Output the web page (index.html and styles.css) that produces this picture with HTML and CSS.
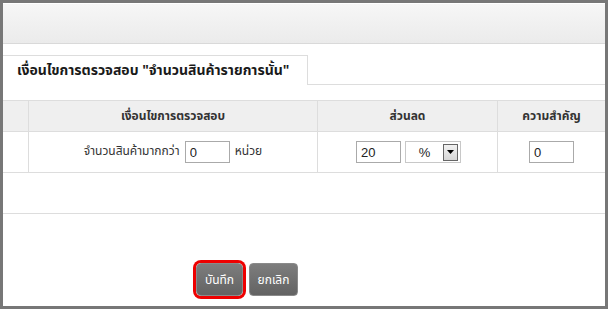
FILE: index.html
```html
<!DOCTYPE html>
<html lang="th">
<head>
  <meta charset="UTF-8">
  <title>เงื่อนไขการตรวจสอบ</title>
  <link rel="stylesheet" href="styles.css">
</head>
<body>

  <div class="dialog">
    <!-- แถบหัวของหน้าต่าง -->
    <div class="dialog-head"></div>

    <div class="tabs">
      <div class="tab">เงื่อนไขการตรวจสอบ "จำนวนสินค้ารายการนั้น"</div>
      <div class="tab-rest"></div>
    </div>

    <table class="grid">
      <tr>
        <th class="col-idx"></th>
        <th class="col-cond">เงื่อนไขการตรวจสอบ</th>
        <th class="col-disc">ส่วนลด</th>
        <th class="col-prio">ความสำคัญ</th>
      </tr>
      <tr>
        <td class="col-idx"></td>
        <td class="col-cond">
          จำนวนสินค้ามากกว่า <input class="num" type="text" value="0"> หน่วย
        </td>
        <td class="col-disc">
          <input class="num" type="text" value="20"><span class="select">
            <span class="select-val">%</span>
            <span class="select-btn">
              <svg width="7" height="4" viewBox="0 0 7 4"><path d="M0 0h7L3.5 4z" fill="#000"/></svg>
            </span>
          </span>
        </td>
        <td class="col-prio"><input class="num" type="text" value="0"></td>
      </tr>
    </table>

    <div class="spacer"></div>

    <div class="actions">
      <button class="btn btn-focus">บันทึก</button>
      <button class="btn">ยกเลิก</button>
    </div>
  </div>

</body>
</html>
```

FILE: styles.css
```css
html, body {
  margin: 0;
  padding: 0;
}
body {
  background: #777777;
  font-family: Tahoma, "Noto Sans Thai", "Loma", "Garuda", "DejaVu Sans", sans-serif;
  font-size: 12px;
  color: #333;
  padding: 3px 3px 3px 3px;
  width: 602px;
  height: 303px;
  overflow: hidden;
}
.dialog {
  background: white;
  height: 303px;
}
.dialog-head {
  height: 39px;
  border-top: 1px solid #ffffff;
  border-bottom: 1px solid #d9d9d9;
  background: linear-gradient(#f6f6f6, #ebebeb);
}
.tabs {
  display: flex;
  align-items: flex-end;
  height: 41px;
}
.tab {
  height: 30px;
  width: 305px;
  box-sizing: border-box;
  padding-left: 14px;
  border-top: 1px solid #dddddd;
  border-right: 1px solid #dddddd;
  font-size: 14px;
  font-weight: bold;
  color: #1a1a1a;
  line-height: 30px;
  white-space: nowrap;
}
.tab-rest {
  flex: 1;
  border-bottom: 1px solid #dddddd;
}
.grid {
  margin-top: 15px;
  width: 100%;
  border-collapse: collapse;
  border-top: 1px solid #dddddd;
  border-bottom: 1px solid #dddddd;
}
.grid th {
  background: #efefef;
  height: 30px;
  padding: 0;
  font-weight: bold;
  color: #333;
  border-bottom: 1px solid #dddddd;
}
.grid td {
  height: 40px;
  padding: 0;
  text-align: center;
}
.grid th + th,
.grid td + td {
  border-left: 1px solid #dddddd;
}
.col-idx { width: 25px; }
.col-cond { width: 288px; }
.col-disc { width: 179px; }
.num {
  width: 45px;
  height: 22px;
  box-sizing: border-box;
  border: 1px solid #aaaaaa;
  padding: 0 4px;
  font-family: "Liberation Sans", Arial, sans-serif;
  font-size: 13px;
  color: #222;
  vertical-align: middle;
  margin: 0 2px;
}
.select {
  display: inline-flex;
  align-items: center;
  width: 56px;
  height: 22px;
  box-sizing: border-box;
  border: 1px solid #c8c8c8;
  vertical-align: middle;
  margin-left: 2px;
}
.select-val {
  flex: 1;
  font-family: "Liberation Sans", Arial, sans-serif;
  font-size: 13px;
  color: #222;
  text-align: center;
}
.select-btn {
  width: 15px;
  height: 17px;
  margin-right: 2px;
  box-sizing: border-box;
  border: 1px solid #666;
  background: linear-gradient(#f2f2f2, #d6d6d6);
  display: flex;
  align-items: center;
  justify-content: center;
}
.spacer {
  height: 40px;
  border-bottom: 1px solid #dddddd;
}
.actions {
  display: flex;
  gap: 6px;
  padding-top: 49px;
  padding-left: 193px;
}
.btn {
  width: 49px;
  height: 33px;
  border: 1px solid #8a8a8a;
  border-radius: 4px;
  background: linear-gradient(#7d7d7d, #636363);
  color: white;
  font-family: Tahoma, "Noto Sans Thai", "Loma", "Garuda", sans-serif;
  font-size: 12px;
  padding: 0;
}
.btn-focus {
  width: 47px;
  box-shadow: 0 0 0 3px #ee0000;
  border-radius: 5px;
}
```
